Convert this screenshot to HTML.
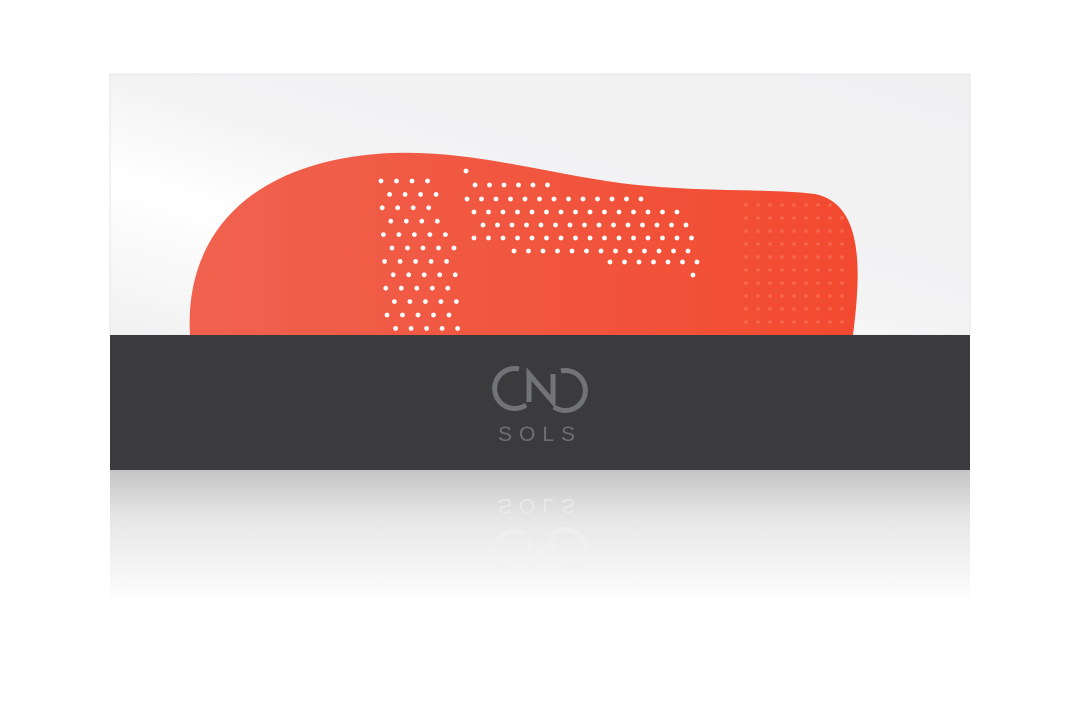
<!DOCTYPE html>
<html><head><style>
html,body{margin:0;padding:0;background:#fff;width:1080px;height:720px;overflow:hidden}
#wrap{position:absolute;left:0;top:0;width:1080px;height:720px}
</style></head><body>
<div id="wrap">
<svg width="1080" height="720" viewBox="0 0 1080 720" xmlns="http://www.w3.org/2000/svg">
<defs>
<linearGradient id="bg" x1="0" y1="1" x2="1" y2="0">
<stop offset="0" stop-color="#f1f1f2"/><stop offset="0.3" stop-color="#ffffff"/><stop offset="0.5" stop-color="#f3f3f4"/><stop offset="1" stop-color="#f0f0f1"/>
</linearGradient>
<linearGradient id="sole" x1="0" y1="0" x2="1" y2="0">
<stop offset="0" stop-color="#f0624f"/><stop offset="1" stop-color="#f24a2f"/>
</linearGradient>
<linearGradient id="refl" x1="0" y1="0" x2="0" y2="1">
<stop offset="0" stop-color="#c4c4c4"/><stop offset="0.35" stop-color="#e6e6e6"/><stop offset="1" stop-color="#ffffff"/>
</linearGradient>
<g id="logo" fill="none" stroke-width="5" stroke-linecap="butt">
<path d="M519,369 A20,20 0 1 0 526,405"/>
<path d="M529,402 L529,374 L553,402 L553,374"/>
<path d="M561,371 A20,20 0 1 1 554,407"/>
</g>
</defs>
<rect x="110" y="74" width="860" height="261" fill="url(#bg)" stroke="#e4e4e4" stroke-width="1"/>
<path d="M190,335 C184,235 250,160 390,153 C470,150 540,172 620,183 C700,193 770,188 815,194 C862,204 862,265 853,335 Z" fill="url(#sole)"/>
<g id="dots" fill="#fff"></g>
<g id="fdots" fill="#ff8a75" opacity="0.45"></g>
<rect x="110" y="335" width="860" height="135" fill="#3b3b3d"/>
<use href="#logo" stroke="#727376"/>
<text x="540" y="441" text-anchor="middle" font-family="Liberation Sans, sans-serif" font-size="21" letter-spacing="7" fill="#6e6f72">SOLS</text>
<rect x="110" y="470" width="860" height="135" fill="url(#refl)"/>
<g transform="translate(0,940) scale(1,-1)" opacity="0.5">
<use href="#logo" stroke="#f2f2f2"/>
</g>
<text x="540" y="-499" transform="scale(1,-1)" text-anchor="middle" font-family="Liberation Sans, sans-serif" font-size="21" letter-spacing="7" fill="#ececec" opacity="0.8">SOLS</text>
</svg>
</div>
<script>
var ns="http://www.w3.org/2000/svg",g=document.getElementById('dots'),f=document.getElementById('fdots');
function d(x,y,r,p){var c=document.createElementNS(ns,'circle');c.setAttribute('cx',x);c.setAttribute('cy',y);c.setAttribute('r',r||2.4);(p||g).appendChild(c);}
for(var i=0;i<12;i++){var y=181+i*13.4,x0=381+(i%2?8:0)+i*0.6,n=i<4?4:5;for(var k=0;k<n;k++)d(x0+k*15.5,y);}
d(466,171);
var rows=[[185,475,6],[199,467,13],[212,474,15],[225,483,15],[238,474,16],[251,514,13],[262,610,7]];
rows.forEach(function(r){for(var k=0;k<r[2];k++)d(r[1]+k*14.5,r[0]);});
d(693,275);
for(var y=205;y<330;y+=13){for(var x=740;x<852;x+=12){var xx=x+((y/13)%2?6:0);if(xx<850 - Math.max(0,(215-y))*1.2)d(xx,y,1.8,f);}}
</script>
</body></html>
